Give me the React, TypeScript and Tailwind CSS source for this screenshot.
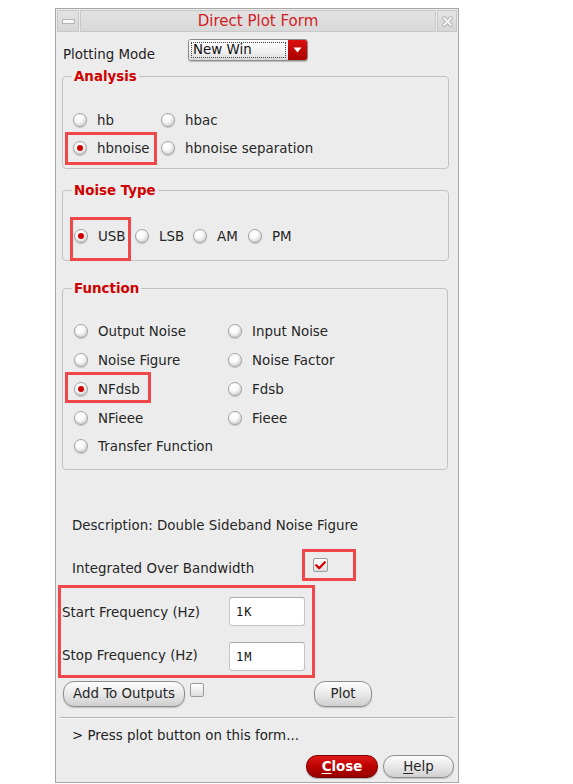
import React from "react";

const FONT = { fontFamily: '"DejaVu Sans", "Liberation Sans", sans-serif' };

function Radio({ checked }: { checked?: boolean }) {
  return (
    <span className="relative inline-block w-[14px] h-[14px] rounded-full shrink-0 border border-[#a4a4a4] bg-[radial-gradient(circle_at_38%_32%,#ffffff_0%,#fafafa_38%,#bdbdbd_100%)] shadow-[0_1px_1px_rgba(0,0,0,0.18)]">
      {checked && (
        <span className="absolute left-[3px] top-[3px] w-[6px] h-[6px] rounded-full bg-[#d00000]" />
      )}
    </span>
  );
}

function RadioItem({ label, checked, w }: { label: string; checked?: boolean; w?: string }) {
  return (
    <div className={`flex items-center ${w ?? ""}`}>
      <Radio checked={checked} />
      <span className="relative top-[1px] ml-[10px] text-[13.4px] leading-[16px] text-[#262626] whitespace-nowrap">{label}</span>
    </div>
  );
}

function Group({
  title,
  className,
  children,
}: {
  title: string;
  className: string;
  children: React.ReactNode;
}) {
  return (
    <div className={`relative ml-[6px] rounded-[4px] border border-[#c2c2c2] ${className}`}>
      <span className="absolute left-[9px] top-[-8px] px-[2px] bg-[#ececec] text-[13.4px] leading-[16px] font-bold text-[#d00000]">
        {title}
      </span>
      {children}
    </div>
  );
}

function PillButton({ children, className }: { children: React.ReactNode; className: string }) {
  return (
    <div
      className={`flex items-center justify-center rounded-[11px] border border-[#8e8e8e] bg-[linear-gradient(#fdfdfd,#e6e6e6_55%,#cfcfcf)] shadow-[0_1px_1px_rgba(0,0,0,0.2)] text-[13.4px] leading-[16px] text-[#262626] ${className}`}
    >
      {children}
    </div>
  );
}

function RedBox({ l, t, w, h }: { l: string; t: string; w: string; h: string }) {
  return <div className={`absolute border-[3px] border-[#f0474b] ${l} ${t} ${w} ${h}`} />;
}

export default function App() {
  return (
    <div className="relative w-[573px] h-[784px] bg-white overflow-hidden pl-[55px] pt-[8px]" style={FONT}>
      <div className="w-[404px] h-[775px] border border-[#a6a6a6] bg-[#ececec] flex flex-col">
        {/* Title bar */}
        <div className="mt-[1px] mx-[1px] h-[22px] flex gap-[1px]">
          <div className="w-[22px] h-full bg-[linear-gradient(#e4e4e4,#d6d6d6)] border border-[#c8c8c8] flex items-center justify-center">
            <span className="block w-[13px] h-[5px] bg-[#f8f8f8] border border-[#b4b4b4]" />
          </div>
          <div className="flex-1 h-full bg-[linear-gradient(#e2e2e2,#d8d8d8)] border border-[#c8c8c8] flex items-center justify-center">
            <span className="text-[15px] leading-[18px] text-[#d41c24]">Direct Plot Form</span>
          </div>
          <div className="w-[20px] h-full bg-[linear-gradient(#e4e4e4,#d6d6d6)] border border-[#c8c8c8] flex items-center justify-center">
            <svg width="13" height="13" viewBox="0 0 13 13">
              <path d="M3 3 L10 10 M10 3 L3 10" stroke="#b4b4b4" strokeWidth="4" strokeLinecap="round" fill="none" />
              <path d="M3 3 L10 10 M10 3 L3 10" stroke="#f6f6f6" strokeWidth="2" strokeLinecap="round" fill="none" />
            </svg>
          </div>
        </div>

        {/* Plotting mode */}
        <div className="mt-[7px] h-[22px] flex items-start pl-[7px]">
          <span className="w-[125px] mt-[8px] text-[13.4px] leading-[16px] text-[#1e1e1e]">Plotting Mode</span>
          <div className="w-[120px] h-[22px] flex rounded-[3px] border border-[#8a8a8a] overflow-hidden shadow-[0_1px_1px_rgba(0,0,0,0.2)]">
            <div className="flex-1 bg-[linear-gradient(#ffffff,#f0f0f0_60%,#d8d8d8)] p-[2px]">
              <div className="h-full border border-dotted border-[#444] flex items-center pl-[1px] text-[13.4px] leading-[16px] text-[#111]">
                New Win
              </div>
            </div>
            <div className="w-[19px] bg-[linear-gradient(#dc1010,#a80000)] flex items-center justify-center">
              <svg width="9" height="6" viewBox="0 0 9 6">
                <path d="M0.5 0.5 L8.5 0.5 L4.5 5.5 Z" fill="#ffffff" />
              </svg>
            </div>
          </div>
        </div>

        {/* Analysis */}
        <Group title="Analysis" className="mt-[15px] w-[387px] h-[93px]">
          <div className="pt-[29px] pl-[10px]">
            <div className="h-[28px] flex items-center">
              <RadioItem label="hb" w="w-[88px]" />
              <RadioItem label="hbac" />
            </div>
            <div className="h-[28px] flex items-center">
              <RadioItem label="hbnoise" checked w="w-[88px]" />
              <RadioItem label="hbnoise separation" />
            </div>
          </div>
        </Group>

        {/* Noise Type */}
        <Group title="Noise Type" className="mt-[21px] w-[387px] h-[71px]">
          <div className="pt-[31px] pl-[11px] h-[28px] box-content flex items-center">
            <RadioItem label="USB" checked w="w-[61px]" />
            <RadioItem label="LSB" w="w-[58px]" />
            <RadioItem label="AM" w="w-[55px]" />
            <RadioItem label="PM" />
          </div>
        </Group>

        {/* Function */}
        <Group title="Function" className="mt-[27px] w-[386px] h-[182px]">
          <div className="pt-[28px] pl-[11px]">
            <div className="h-[28.75px] flex items-center">
              <RadioItem label="Output Noise" w="w-[154px]" />
              <RadioItem label="Input Noise" />
            </div>
            <div className="h-[28.75px] flex items-center">
              <RadioItem label="Noise Figure" w="w-[154px]" />
              <RadioItem label="Noise Factor" />
            </div>
            <div className="h-[28.75px] flex items-center">
              <RadioItem label="NFdsb" checked w="w-[154px]" />
              <RadioItem label="Fdsb" />
            </div>
            <div className="h-[28.75px] flex items-center">
              <RadioItem label="NFieee" w="w-[154px]" />
              <RadioItem label="Fieee" />
            </div>
            <div className="h-[28.75px] flex items-center">
              <RadioItem label="Transfer Function" />
            </div>
          </div>
        </Group>

        {/* Description */}
        <div className="mt-[48px] ml-[16px] text-[13.4px] leading-[16px] text-[#262626]">
          Description: Double Sideband Noise Figure
        </div>

        {/* Integrated */}
        <div className="mt-[23px] ml-[16px] flex items-start h-[19px]">
          <span className="w-[241px] mt-[4px] text-[13.4px] leading-[16px] text-[#262626]">Integrated Over Bandwidth</span>
          <div className="mt-[1px] w-[15px] h-[14px] border border-[#9c9c9c] rounded-[2px] bg-[linear-gradient(#ffffff,#dedede)] flex items-center justify-center">
            <svg width="11" height="9" viewBox="0 0 11 9">
              <path d="M1.2 4.2 L4.2 7.2 L9.8 1.2" stroke="#d40000" strokeWidth="2.2" fill="none" strokeLinecap="round" strokeLinejoin="round" />
            </svg>
          </div>
        </div>

        {/* Start freq */}
        <div className="mt-[21px] ml-[6px] flex items-start h-[29px]">
          <span className="w-[167px] mt-[8px] text-[13.4px] leading-[16px] text-[#262626]">Start Frequency (Hz)</span>
          <div className="w-[76px] h-[29px] bg-white border border-[#c4c4c4] border-t-[#a8a8a8] rounded-[3px] flex items-center pl-[6px] text-[12px] leading-[16px] tracking-[1px] text-[#111]" style={{ fontFamily: '"DejaVu Sans Mono", "Liberation Mono", monospace' }}>
            1K
          </div>
        </div>

        {/* Stop freq */}
        <div className="mt-[16px] ml-[6px] flex items-start h-[29px]">
          <span className="w-[167px] mt-[6px] text-[13.4px] leading-[16px] text-[#262626]">Stop Frequency (Hz)</span>
          <div className="w-[76px] h-[29px] bg-white border border-[#c4c4c4] border-t-[#a8a8a8] rounded-[3px] flex items-center pl-[6px] text-[12px] leading-[16px] tracking-[1px] text-[#111]" style={{ fontFamily: '"DejaVu Sans Mono", "Liberation Mono", monospace' }}>
            1M
          </div>
        </div>

        {/* Buttons row */}
        <div className="mt-[10px] ml-[7px] flex items-start h-[26px]">
          <PillButton className="w-[122px] h-[26px]">Add To Outputs</PillButton>
          <div className="ml-[5px] mt-[2px] w-[14px] h-[14px] border border-[#9c9c9c] rounded-[2px] bg-[linear-gradient(#ffffff,#dedede)]" />
          <PillButton className="ml-[110px] w-[58px] h-[26px]">Plot</PillButton>
        </div>

        {/* Separator */}
        <div className="mt-[10px] ml-[4px] w-[395px] h-[1px] bg-[#b4b4b4]" />
        <div className="ml-[4px] w-[395px] h-[1px] bg-[#fafafa]" />

        {/* Status */}
        <div className="mt-[9px] ml-[16px] text-[13.4px] leading-[16px] text-[#1e1e1e]">
          &gt; Press plot button on this form...
        </div>

        {/* Close / Help */}
        <div className="mt-[11px] ml-[250px] flex gap-[5px]">
          <div className="w-[72px] h-[23px] flex items-center justify-center rounded-[11px] border border-[#7a0000] bg-[linear-gradient(#e01818,#b80000_55%,#960000)] shadow-[0_1px_1px_rgba(0,0,0,0.25)] text-[13.4px] leading-[16px] font-bold text-white">
            <span className="underline underline-offset-[2px]">C</span>lose
          </div>
          <PillButton className="w-[71px] h-[23px]">
            <span className="underline underline-offset-[2px]">H</span>elp
          </PillButton>
        </div>
      </div>

      {/* Annotation boxes */}
      <RedBox l="left-[65px]" t="top-[132px]" w="w-[92px]" h="h-[33px]" />
      <RedBox l="left-[70px]" t="top-[217px]" w="w-[61px]" h="h-[44px]" />
      <RedBox l="left-[65px]" t="top-[372px]" w="w-[86px]" h="h-[31px]" />
      <RedBox l="left-[302px]" t="top-[549px]" w="w-[54px]" h="h-[32px]" />
      <RedBox l="left-[58px]" t="top-[585px]" w="w-[257px]" h="h-[93px]" />
    </div>
  );
}
